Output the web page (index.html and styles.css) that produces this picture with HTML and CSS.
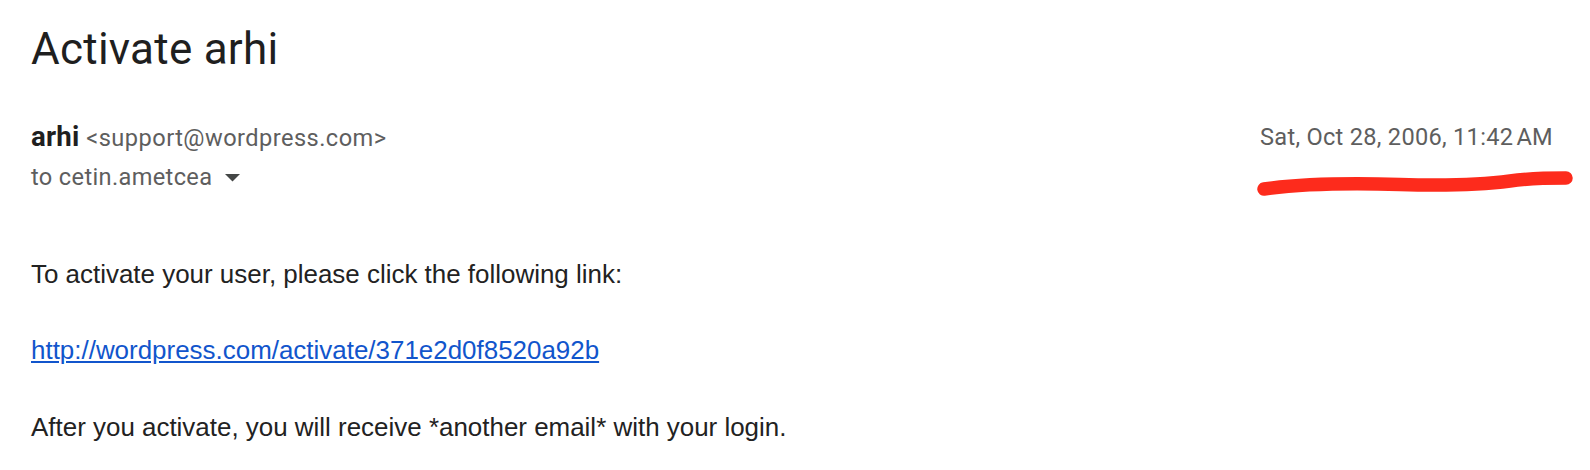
FILE: index.html
```html
<!DOCTYPE html>
<html>
<head>
<meta charset="utf-8">
<link rel="stylesheet" href="styles.css">
</head>
<body>
<div class="page">
  <h2 class="subject">Activate arhi</h2>
  <div class="header">
    <div class="from">
      <div class="sender"><span class="name">arhi</span> <span class="email">&lt;support@wordpress.com&gt;</span></div>
      <div class="to">to cetin.ametcea<svg class="caret" width="15" height="8" viewBox="0 0 15 8"><path d="M0 0 L15 0 L7.5 7.5 Z" fill="#444746"/></svg></div>
    </div>
    <div class="date">Sat, Oct 28, 2006, 11:42&#8239;AM</div>
  </div>
  <div class="body">
    <div class="line first">To activate your user, please click the following link:</div>
    <div class="line"><a href="#">http://wordpress.com/activate/371e2d0f8520a92b</a></div>
    <div class="line">After you activate, you will receive *another email* with your login.</div>
  </div>
</div>
<svg class="scribble" width="1590" height="470" viewBox="0 0 1590 470"><path d="M1264 189 C 1300 184, 1350 183, 1400 184.5 C 1450 186, 1480 185, 1510 181 C 1530 178, 1550 178, 1566 178" fill="none" stroke="#fd2b1c" stroke-width="13.5" stroke-linecap="round"/></svg>
</body>
</html>
```
FILE: styles.css
```css
html, body {
  margin: 0;
  padding: 0;
  background: #ffffff;
}
body {
  position: relative;
  width: 1590px;
  height: 470px;
  overflow: hidden;
}
.page {
  padding: 20.5px 37px 0 31px;
}
.subject {
  margin: 0;
  font-family: Roboto, "Liberation Sans", sans-serif;
  font-weight: 400;
  font-size: 44px;
  letter-spacing: 0.25px;
  line-height: 56px;
  color: #1f1f1f;
}
.header {
  display: flex;
  justify-content: space-between;
  align-items: flex-start;
  margin-top: 44px;
}
.sender {
  font-family: Roboto, "Liberation Sans", sans-serif;
  font-size: 27.6px;
  line-height: 32px;
  height: 32px;
  color: #1f1f1f;
}
.name {
  font-weight: 700;
  letter-spacing: 0.2px;
}
.email {
  font-size: 23.6px;
  letter-spacing: 0.45px;
  color: #5e5e5e;
}
.to {
  display: flex;
  align-items: center;
  margin-top: 10px;
  font-family: Roboto, "Liberation Sans", sans-serif;
  font-size: 23.6px;
  letter-spacing: 0.35px;
  line-height: 28px;
  height: 28px;
  color: #5e5e5e;
}
.caret {
  margin-left: 13px;
  margin-top: 3px;
}
.date {
  font-family: Roboto, "Liberation Sans", sans-serif;
  font-size: 23.6px;
  line-height: 32px;
  color: #5e5e5e;
  letter-spacing: 0.28px;
}
.body {
  margin-top: 64px;
  font-family: "Liberation Sans", Arial, sans-serif;
  font-size: 25.95px;
  line-height: 39px;
  color: #222222;
}
.line + .line {
  margin-top: 37.5px;
}
.body a {
  color: #1155cc;
  text-decoration: underline;
}
.scribble {
  position: absolute;
  left: 0;
  top: 0;
  pointer-events: none;
}
```
